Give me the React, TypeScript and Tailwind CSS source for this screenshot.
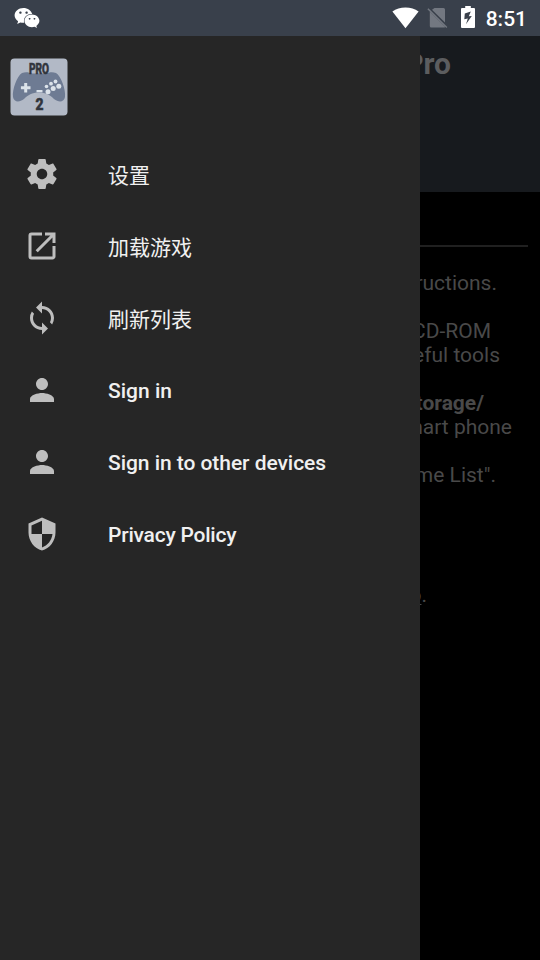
import type { ReactNode } from 'react';
import { FaWeixin } from 'react-icons/fa';
import { MdOpenInNew, MdPerson, MdSecurity, MdSync } from 'react-icons/md';

interface MenuEntry {
  label: string;
  icon: ReactNode;
  labelClass: string;
}

interface GuideLine {
  text: string;
  className: string;
}

function SettingsIcon() {
  return (
    <svg viewBox="0 0 24 24" fill="currentColor" className="size-9">
      <path d="M19.43 12.98c.04-.32.07-.64.07-.98s-.03-.66-.07-.98l2.11-1.65c.19-.15.24-.42.12-.64l-2-3.46c-.12-.22-.39-.3-.61-.22l-2.49 1c-.52-.4-1.08-.73-1.69-.98l-.38-2.65C14.46 2.18 14.25 2 14 2h-4c-.25 0-.46.18-.49.42l-.38 2.65c-.61.25-1.17.59-1.69.98l-2.49-1c-.23-.09-.49 0-.61.22l-2 3.46c-.13.22-.07.49.12.64l2.11 1.65c-.04.32-.07.65-.07.98s.03.66.07.98l-2.11 1.65c-.19.15-.24.42-.12.64l2 3.46c.12.22.39.3.61.22l2.49-1c.52.4 1.08.73 1.69.98l.38 2.65c.03.24.24.42.49.42h4c.25 0 .46-.18.49-.42l.38-2.65c.61-.25 1.17-.59 1.69-.98l2.49 1c.23.09.49 0 .61-.22l2-3.46c.12-.22.07-.49-.12-.64l-2.11-1.65zM12 15.5c-1.93 0-3.5-1.57-3.5-3.5s1.57-3.5 3.5-3.5 3.5 1.57 3.5 3.5-1.57 3.5-3.5 3.5z" />
    </svg>
  );
}

const menu: MenuEntry[] = [
  { label: '设置', icon: <SettingsIcon />, labelClass: 'pt-1' },
  { label: '加载游戏', icon: <MdOpenInNew className="size-9" />, labelClass: 'pt-1' },
  { label: '刷新列表', icon: <MdSync className="size-9" />, labelClass: 'pt-1' },
  { label: 'Sign in', icon: <MdPerson className="size-9" />, labelClass: 'pt-0.5 font-medium' },
  {
    label: 'Sign in to other devices',
    icon: <MdPerson className="size-9" />,
    labelClass: 'pt-0.5 font-medium tracking-[-0.05px]',
  },
  {
    label: 'Privacy Policy',
    icon: <MdSecurity className="size-9" />,
    labelClass: 'pt-0.5 font-medium tracking-[-0.22px]',
  },
];

const guide: GuideLine[] = [
  { text: 'tructions.', className: 'pr-[43px]' },
  { text: 'CD-ROM', className: 'mt-6 pr-[49px]' },
  { text: 'eful tools', className: 'pr-10' },
  { text: 'torage/', className: 'mt-6 pr-14 font-bold' },
  { text: 'mart phone', className: 'pr-7' },
  { text: 'me List".', className: 'mt-6 pr-11' },
];

function StatusBar() {
  return (
    <header className="flex h-9 items-center justify-between bg-[#39404b] pl-[14px] pr-[13px] text-white">
      <FaWeixin className="size-[26px]" />
      <div className="flex items-center">
        <svg viewBox="0 0 27 22" className="mr-2 h-[22px] w-[27px]" fill="currentColor">
          <path d="M13.5 21.3.4 4.6C4 1.8 8.500.5 13.500.5S23 1.800 26.600 4.600z" />
        </svg>
        <svg viewBox="0 0 21 22" className="mr-[13px] h-[22px] w-[21px]" fill="#737881">
          <path d="M7.500 1H16.500a1.500 1.500 0 0 1 1.500 1.500V15.500L5 2.800z" />
          <path d="M2.800 4.500V19a1.500 1.500 0 0 0 1.500 1.500H17.500L18.300 20z" />
          <path d="M.4 2.200 1.400 1.200 20.300 20 19.300 21z" />
        </svg>
        <svg viewBox="0 0 14 22" className="relative -top-px mr-[11px] h-[22px] w-[14px]" fill="currentColor">
          <path
            fillRule="evenodd"
            d="M4.200 0h5.600v2h3.200a1 1 0 0 1 1 1v18a1 1 0 0 1-1 1H1a1 1 0 0 1-1-1V3a1 1 0 0 1 1-1h3.200zM9.800 5.500 3.800 7.500 3.300 13.200 6.800 12.500 5 18.200 10.800 10 7.800 10.300z"
          />
        </svg>
        <span className="pt-0.5 text-[21px] font-medium leading-none">8:51</span>
      </div>
    </header>
  );
}

function AppLogo() {
  return (
    <svg viewBox="0 0 58 58" className="size-[58px]">
      <rect x="0.500" y="0.500" width="57" height="57" rx="4" fill="#b2b9c6" />
      <path
        d="M12 15C16 13.500 19 14.500 22 15.500H36C39 14.500 42 13.500 46 15C51 18 56 32 55 39C54 44.500 48.500 44.500 44 41C40 37 36 34.500 29 34.500S18 37 14 41C9.500 44.500 4 44.500 3 39C2 32 7 18 12 15Z"
        fill="#6e7b93"
      />
      <path d="M14.200 25h3v3.200h3.300v3h-3.300v3.300h-3v-3.300h-3.300v-3h3.300z" fill="#dce3ea" />
      <rect x="26.500" y="32" width="6" height="2.300" rx="0.500" fill="#dce3ea" />
      <g fill="#dce3ea">
        <circle cx="36.500" cy="28.500" r="1.800" />
        <circle cx="41" cy="25.700" r="1.900" />
        <circle cx="45.500" cy="23.500" r="1.900" />
        <circle cx="38" cy="33.800" r="2.500" />
        <circle cx="43.200" cy="30.600" r="2.500" />
        <circle cx="48.800" cy="28.300" r="2.500" />
      </g>
      <g fill="#30343c" stroke="#30343c" strokeWidth="0.600" fontFamily="Roboto, sans-serif" fontWeight="800" textAnchor="middle">
        <text x="29" y="15.500" fontSize="14" textLength="20" lengthAdjust="spacingAndGlyphs">
          PRO
        </text>
        <text x="29.500" y="51.500" fontSize="16" textLength="8" lengthAdjust="spacingAndGlyphs">
          2
        </text>
      </g>
    </svg>
  );
}

function Drawer() {
  return (
    <nav className="w-[420px] shrink-0 bg-[#262626]">
      <div className="h-[102px] pl-[10px] pt-[22px]">
        <AppLogo />
      </div>
      <ul>
        {menu.map((entry) => (
          <li key={entry.label} className="flex h-[72px] items-center gap-12 pl-6 text-[#bebebe]">
            {entry.icon}
            <span className={`text-[21px] leading-none text-[#f0f0f0] ${entry.labelClass}`}>
              {entry.label}
            </span>
          </li>
        ))}
      </ul>
    </nav>
  );
}

// The strip of the main screen left uncovered by the open drawer
function MainScreen() {
  return (
    <main className="flex min-w-0 flex-1 flex-col overflow-hidden bg-black text-[#494949]">
      <div className="flex h-[156px] justify-end bg-[#171a1e] pr-[89px] pt-2.5">
        <h1 className="text-[30px] font-bold leading-9 text-[#5c5d5f]">Pro</h1>
      </div>
      <div className="mr-3 mt-[53px] h-0.5 bg-[#202020]" />
      <div className="mt-6 text-[21px] leading-6">
        {guide.map((line) => (
          <p key={line.text} className={`flex justify-end whitespace-nowrap ${line.className}`}>
            {line.text}
          </p>
        ))}
        <p className="mt-24 flex justify-end pr-[113px]">
          <span className="underline decoration-1 underline-offset-2">o</span>.
        </p>
      </div>
    </main>
  );
}

export default function App() {
  return (
    <div className="flex h-[960px] w-[540px] flex-col overflow-hidden bg-black font-[Roboto,'Noto_Sans_CJK_SC',sans-serif]">
      <StatusBar />
      <div className="flex min-h-0 flex-1">
        <Drawer />
        <MainScreen />
      </div>
    </div>
  );
}
